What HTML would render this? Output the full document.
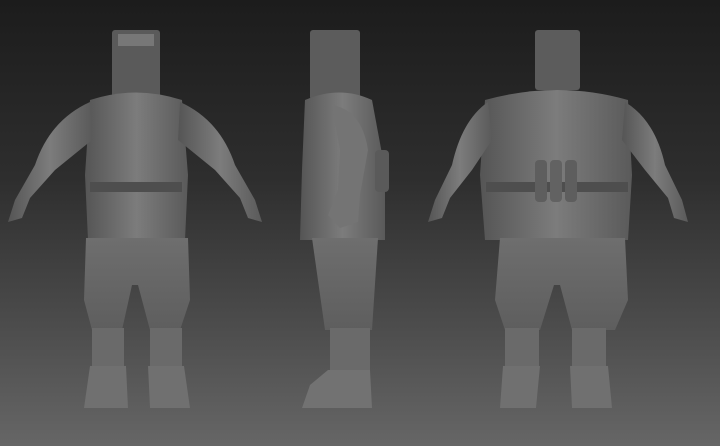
<!DOCTYPE html>
<html><head><meta charset="utf-8"><style>
html,body{margin:0;padding:0;width:720px;height:446px;overflow:hidden}
body{background:linear-gradient(#1c1c1c 0%,#2e2e2e 40%,#4e4e4e 75%,#666 100%)}
svg{display:block}
</style></head><body>
<svg width="720" height="446" viewBox="0 0 720 446">
<defs>
<linearGradient id="g" x1="0" y1="0" x2="1" y2="0">
<stop offset="0" stop-color="#555"/><stop offset="0.5" stop-color="#7c7c7c"/><stop offset="1" stop-color="#5a5a5a"/>
</linearGradient>
<linearGradient id="gv" x1="0" y1="0" x2="0" y2="1">
<stop offset="0" stop-color="#6e6e6e"/><stop offset="1" stop-color="#5e5e5e"/>
</linearGradient>
</defs>
<!-- Figure 1 front -->
<g fill="url(#g)">
<rect x="112" y="30" width="48" height="68" rx="3" fill="#5a5a5a"/>
<rect x="118" y="34" width="36" height="12" fill="#777"/>
<path d="M90 100 Q135 85 182 100 L188 175 L185 240 L88 240 L85 175 Z"/>
<path d="M90 102 Q50 120 35 165 L15 200 L8 222 L22 218 L30 198 L55 170 L92 140 Z"/>
<path d="M180 102 Q220 120 235 165 L255 200 L262 222 L248 218 L240 198 L215 170 L178 140 Z"/>
<path d="M86 238 L188 238 L190 300 L180 330 L150 330 L138 285 L132 285 L122 330 L92 330 L84 300 Z" fill="url(#gv)"/>
<rect x="92" y="328" width="32" height="40" fill="#6a6a6a"/>
<rect x="150" y="328" width="32" height="40" fill="#6a6a6a"/>
<path d="M90 366 L126 366 L128 408 L84 408 Z" fill="#707070"/>
<path d="M148 366 L184 366 L190 408 L150 408 Z" fill="#707070"/>
<rect x="90" y="182" width="92" height="10" fill="#4e4e4e"/>
</g>
<!-- Figure 2 side -->
<g fill="url(#g)">
<rect x="310" y="30" width="50" height="70" rx="3" fill="#5c5c5c"/>
<path d="M305 100 Q340 85 372 100 L385 170 L385 240 L300 240 L302 170 Z"/>
<path d="M332 105 Q362 110 368 150 L360 195 L358 222 L340 228 L328 215 L338 190 L340 150 Z" fill="#747474"/>
<rect x="375" y="150" width="14" height="42" rx="4" fill="#5a5a5a"/>
<path d="M312 238 L378 238 L372 330 L325 330 Z" fill="url(#gv)"/>
<rect x="330" y="328" width="40" height="44" fill="#6a6a6a"/>
<path d="M328 370 L370 370 L372 408 L302 408 L310 385 Z" fill="#727272"/>
</g>
<!-- Figure 3 back -->
<g fill="url(#g)">
<rect x="535" y="30" width="45" height="60" rx="3" fill="#5c5c5c"/>
<path d="M485 100 Q558 80 628 100 L632 175 L628 240 L485 240 L480 175 Z"/>
<path d="M488 102 Q462 120 452 165 L435 200 L428 222 L442 218 L450 198 L472 170 L492 140 Z"/>
<path d="M625 102 Q655 120 665 165 L682 200 L688 222 L674 218 L668 198 L645 170 L622 140 Z"/>
<rect x="486" y="182" width="142" height="10" fill="#4e4e4e"/>
<rect x="535" y="160" width="12" height="42" rx="4" fill="#5e5e5e"/>
<rect x="550" y="160" width="12" height="42" rx="4" fill="#626262"/>
<rect x="565" y="160" width="12" height="42" rx="4" fill="#5e5e5e"/>
<path d="M500 238 L625 238 L628 300 L615 330 L572 330 L560 285 L554 285 L540 330 L505 330 L495 300 Z" fill="url(#gv)"/>
<rect x="505" y="328" width="34" height="40" fill="#6a6a6a"/>
<rect x="572" y="328" width="34" height="40" fill="#6a6a6a"/>
<path d="M503 366 L540 366 L536 408 L500 408 Z" fill="#707070"/>
<path d="M570 366 L608 366 L612 408 L572 408 Z" fill="#707070"/>
</g>
</svg>
</body></html>
